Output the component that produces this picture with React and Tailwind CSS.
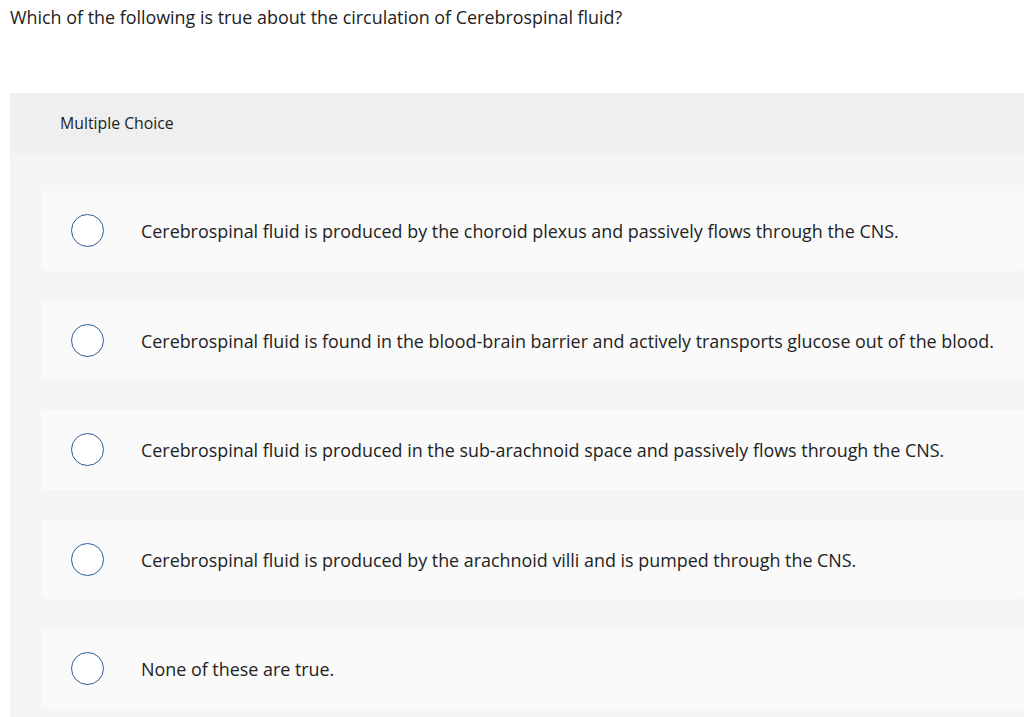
const options = [
  "Cerebrospinal fluid is produced by the choroid plexus and passively flows through the CNS.",
  "Cerebrospinal fluid is found in the blood-brain barrier and actively transports glucose out of the blood.",
  "Cerebrospinal fluid is produced in the sub-arachnoid space and passively flows through the CNS.",
  "Cerebrospinal fluid is produced by the arachnoid villi and is pumped through the CNS.",
  "None of these are true.",
];

const Option = ({ text }) => (
  <div className="flex items-center h-[79.5px] bg-[#fafafa] rounded-[3px] pl-[30px]">
    <span className="w-[33px] h-[33px] shrink-0 rounded-full border-[1.5px] border-[#2d5d93] bg-white" />
    <span className="ml-[37px] mt-[3px] text-[17.9px] leading-none text-[#222] whitespace-nowrap">{text}</span>
  </div>
);

export default function App() {
  return (
    <div className="w-[1024px] h-[717px] overflow-hidden bg-white font-['Open_Sans',sans-serif]">
      <div className="pl-[10px] pt-[9px] h-[93px] text-[17.9px] leading-none text-[#222]">
        Which of the following is true about the circulation of Cerebrospinal fluid?
      </div>
      <div className="ml-[10px] bg-[#f5f5f5]">
        <div className="h-[60px] bg-[#efefef] flex items-center pl-[50px] pt-[2px] text-[15.8px] leading-none text-[#222]">
          Multiple Choice
        </div>
        <div className="flex flex-col gap-[30px] pt-[38px] pl-[31px] pb-[10px]">
          {options.map((t) => (
            <Option key={t} text={t} />
          ))}
        </div>
      </div>
    </div>
  );
}
